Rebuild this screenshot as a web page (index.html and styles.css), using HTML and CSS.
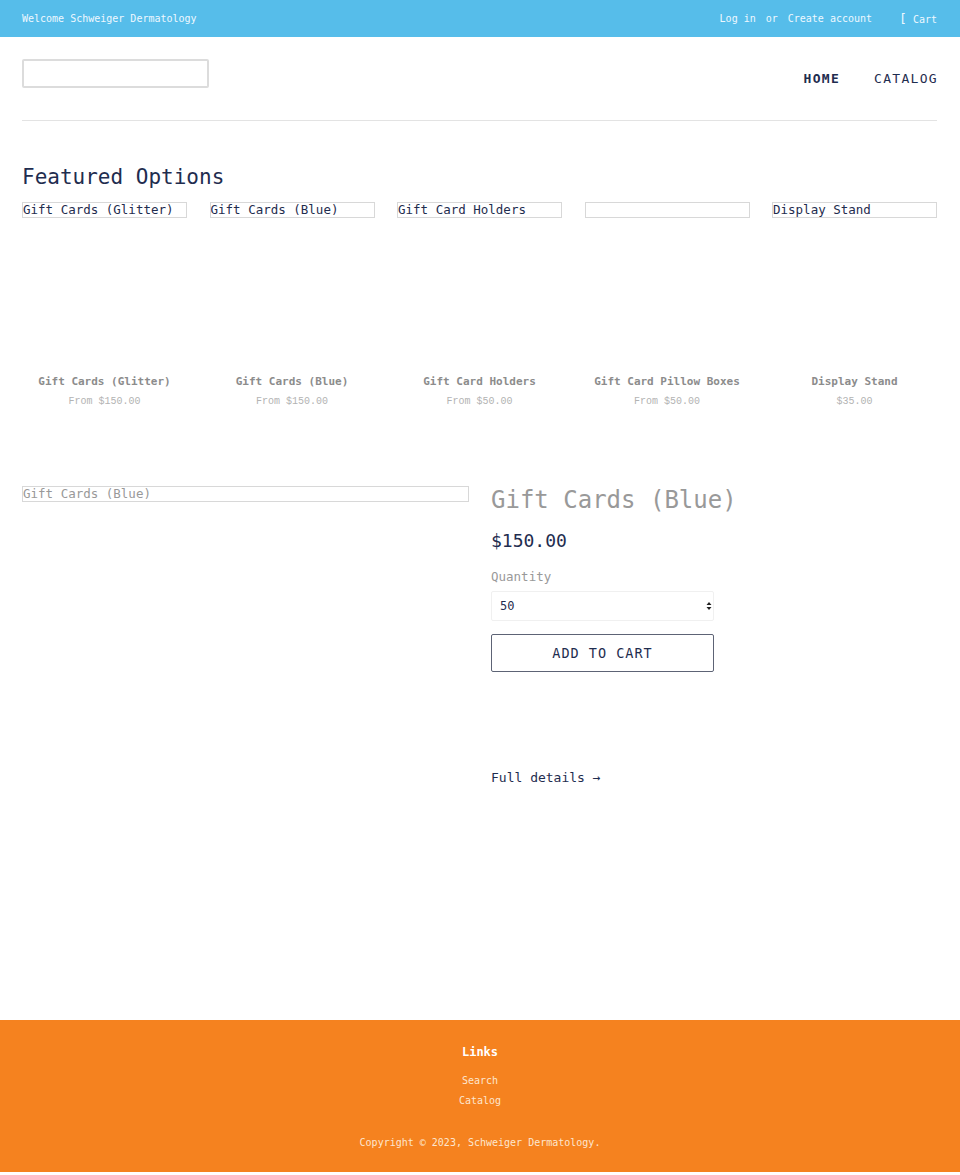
FILE: index.html
```html
<!DOCTYPE html>
<html lang="en">

<head>
    <meta charset="UTF-8">
    <meta name="viewport" content="width=device-width, initial-scale=1.0">
    <title>Schweiger Dermatology</title>
    <link rel="stylesheet" href="styles.css">
</head>

<body>

    <!-- Announcement / account bar -->
    <div class="top-bar">
        <div class="wrapper top-bar-inner">
            <span class="welcome">Welcome Schweiger Dermatology</span>
            <div class="account-links">
                <a href="#">Log in</a>
                <span class="sep">or</span>
                <a href="#">Create account</a>
                <a href="#" class="cart-link"><span class="cart-icon">[</span> Cart</a>
            </div>
        </div>
    </div>

    <main class="page">
        <header class="wrapper site-header">
            <input type="search" class="search-input" aria-label="Search">
            <nav class="site-nav">
                <a href="#" class="active">HOME</a>
                <a href="#">CATALOG</a>
            </nav>
        </header>

        <section class="wrapper featured">
            <h2 class="section-title">Featured Options</h2>
            <div class="product-grid">
                <a href="#" class="grid-item">
                    <div class="grid-image"><span class="alt-box">Gift Cards (Glitter)</span></div>
                    <p class="grid-title">Gift Cards (Glitter)</p>
                    <p class="grid-price">From $150.00</p>
                </a>
                <a href="#" class="grid-item">
                    <div class="grid-image"><span class="alt-box">Gift Cards (Blue)</span></div>
                    <p class="grid-title">Gift Cards (Blue)</p>
                    <p class="grid-price">From $150.00</p>
                </a>
                <a href="#" class="grid-item">
                    <div class="grid-image"><span class="alt-box">Gift Card Holders</span></div>
                    <p class="grid-title">Gift Card Holders</p>
                    <p class="grid-price">From $50.00</p>
                </a>
                <a href="#" class="grid-item">
                    <div class="grid-image"><span class="alt-box"></span></div>
                    <p class="grid-title">Gift Card Pillow Boxes</p>
                    <p class="grid-price">From $50.00</p>
                </a>
                <a href="#" class="grid-item">
                    <div class="grid-image"><span class="alt-box">Display Stand</span></div>
                    <p class="grid-title">Display Stand</p>
                    <p class="grid-price">$35.00</p>
                </a>
            </div>
        </section>

        <section class="wrapper featured-product">
            <div class="product-photo">
                <span class="alt-box alt-box-muted">Gift Cards (Blue)</span>
            </div>
            <div class="product-info">
                <h1 class="product-title">Gift Cards (Blue)</h1>
                <p class="product-price">$150.00</p>
                <label class="qty-label" for="qty">Quantity</label>
                <div class="select-wrap">
                    <select id="qty" class="qty-select">
                        <option>50</option>
                        <option>100</option>
                        <option>250</option>
                    </select>
                    <svg class="select-arrows" width="6" height="10" viewBox="0 0 6 10">
                        <path d="M3 1 L5.5 4 L0.5 4 Z M3 9 L5.5 6 L0.5 6 Z" fill="#222" />
                    </svg>
                </div>
                <button type="button" class="add-btn">ADD TO CART</button>
                <a href="#" class="full-details">Full details &rarr;</a>
            </div>
        </section>
    </main>

    <footer class="site-footer">
        <h4 class="footer-title">Links</h4>
        <ul class="footer-links">
            <li><a href="#">Search</a></li>
            <li><a href="#">Catalog</a></li>
        </ul>
        <p class="copyright">Copyright &copy; 2023, Schweiger Dermatology.</p>
    </footer>

</body>

</html>
```

FILE: styles.css
```css
/* Base */
body {
    margin: 0 0 2px;
    font-family: 'DejaVu Sans Mono', 'Liberation Mono', monospace;
    color: #1f2d4f;
    background: #ffffff;
}

a {
    color: inherit;
    text-decoration: none;
}

p {
    margin: 0;
}

.wrapper {
    padding: 0 23px 0 22px;
}

/* Top bar */
.top-bar {
    background: #56bdea;
    color: #eef8ff;
    font-size: 10px;
    height: 37px;
}

.top-bar-inner {
    display: flex;
    justify-content: space-between;
    align-items: center;
    height: 100%;
}

.account-links {
    display: flex;
    align-items: center;
    gap: 10px;
}

.cart-link {
    margin-left: 17px;
}

.cart-icon {
    font-size: 13px;
}

/* Page body */
.page {
    min-height: 983px;
}

.site-header {
    display: flex;
    justify-content: space-between;
    align-items: flex-start;
    height: 83px;
    margin: 0 23px 0 22px;
    padding: 0;
    border-bottom: 1px solid #e3e3e3;
}

.search-input {
    margin-top: 22px;
    width: 187px;
    height: 29px;
    box-sizing: border-box;
    border: 2px solid #dcdcdc;
    border-radius: 2px;
    background: #fff;
    padding: 0 6px;
}

.site-nav {
    display: flex;
    gap: 34px;
    margin-top: 34px;
}

.site-nav a {
    font-size: 13px;
    line-height: 16px;
    letter-spacing: 1.3px;
    color: #1f2d4f;
}

.site-nav a:last-child {
    margin-right: -1px;
}

.site-nav .active {
    font-weight: bold;
}

/* Featured collection grid */
.section-title {
    margin: 44px 0 12px;
    font-size: 21px;
    line-height: 25px;
    font-weight: normal;
    color: #1f2d4f;
}

.product-grid {
    display: grid;
    grid-template-columns: repeat(5, 1fr);
    column-gap: 22.5px;
}

.grid-item {
    display: block;
    text-align: center;
}

.grid-image {
    height: 165px;
}

.alt-box {
    display: block;
    height: 16px;
    box-sizing: border-box;
    border: 1px solid #d8d8d8;
    font-size: 12.5px;
    line-height: 13px;
    text-align: left;
    color: #1f2d4f;
    white-space: nowrap;
    overflow: hidden;
}

.grid-title {
    margin-top: 8px;
    font-size: 11px;
    line-height: 14px;
    font-weight: bold;
    color: #8c8c8c;
}

.grid-price {
    margin-top: 6px;
    font-size: 10px;
    line-height: 14px;
    color: #b3b3b3;
    font-family: 'Liberation Mono', monospace;
}

/* Featured product */
.featured-product {
    display: grid;
    grid-template-columns: 447px 1fr;
    column-gap: 22px;
    margin-top: 77px;
}

.alt-box-muted {
    color: #999;
}

.product-title {
    margin: 0;
    font-size: 24px;
    line-height: 29px;
    font-weight: normal;
    color: #999;
}

.product-price {
    margin-top: 15px;
    font-size: 18px;
    line-height: 22px;
    color: #1f2d4f;
}

.qty-label {
    display: block;
    margin-top: 17px;
    font-size: 12.5px;
    line-height: 16px;
    color: #999;
}

.select-wrap {
    position: relative;
    width: 223px;
    margin-top: 6px;
}

.qty-select {
    width: 100%;
    height: 30px;
    box-sizing: border-box;
    appearance: none;
    -webkit-appearance: none;
    border: 1px solid #f0f0f0;
    border-radius: 2px;
    background: #fff;
    padding: 0 8px;
    font-family: inherit;
    font-size: 12px;
    color: #1f2d4f;
}

.select-arrows {
    position: absolute;
    right: 2px;
    top: 10px;
    pointer-events: none;
}

.add-btn {
    display: block;
    margin-top: 13px;
    width: 223px;
    height: 38px;
    background: #fff;
    border: 1px solid #5d6375;
    border-radius: 2px;
    font-family: inherit;
    font-size: 13.5px;
    letter-spacing: 1px;
    color: #1f2d4f;
    cursor: pointer;
}

.full-details {
    display: inline-block;
    margin-top: 98px;
    font-size: 13px;
    line-height: 16px;
    color: #1f2d4f;
}

/* Footer */
.site-footer {
    background: #f5821f;
    color: #fde6cf;
    text-align: center;
    padding: 25px 0 19px;
    font-size: 10px;
}

.footer-title {
    margin: 0;
    font-size: 12px;
    line-height: 15px;
    color: #ffffff;
}

.footer-links {
    list-style: none;
    margin: 11px 0 0;
    padding: 0;
    line-height: 20px;
}

.copyright {
    margin-top: 22px;
    line-height: 20px;
}
```
